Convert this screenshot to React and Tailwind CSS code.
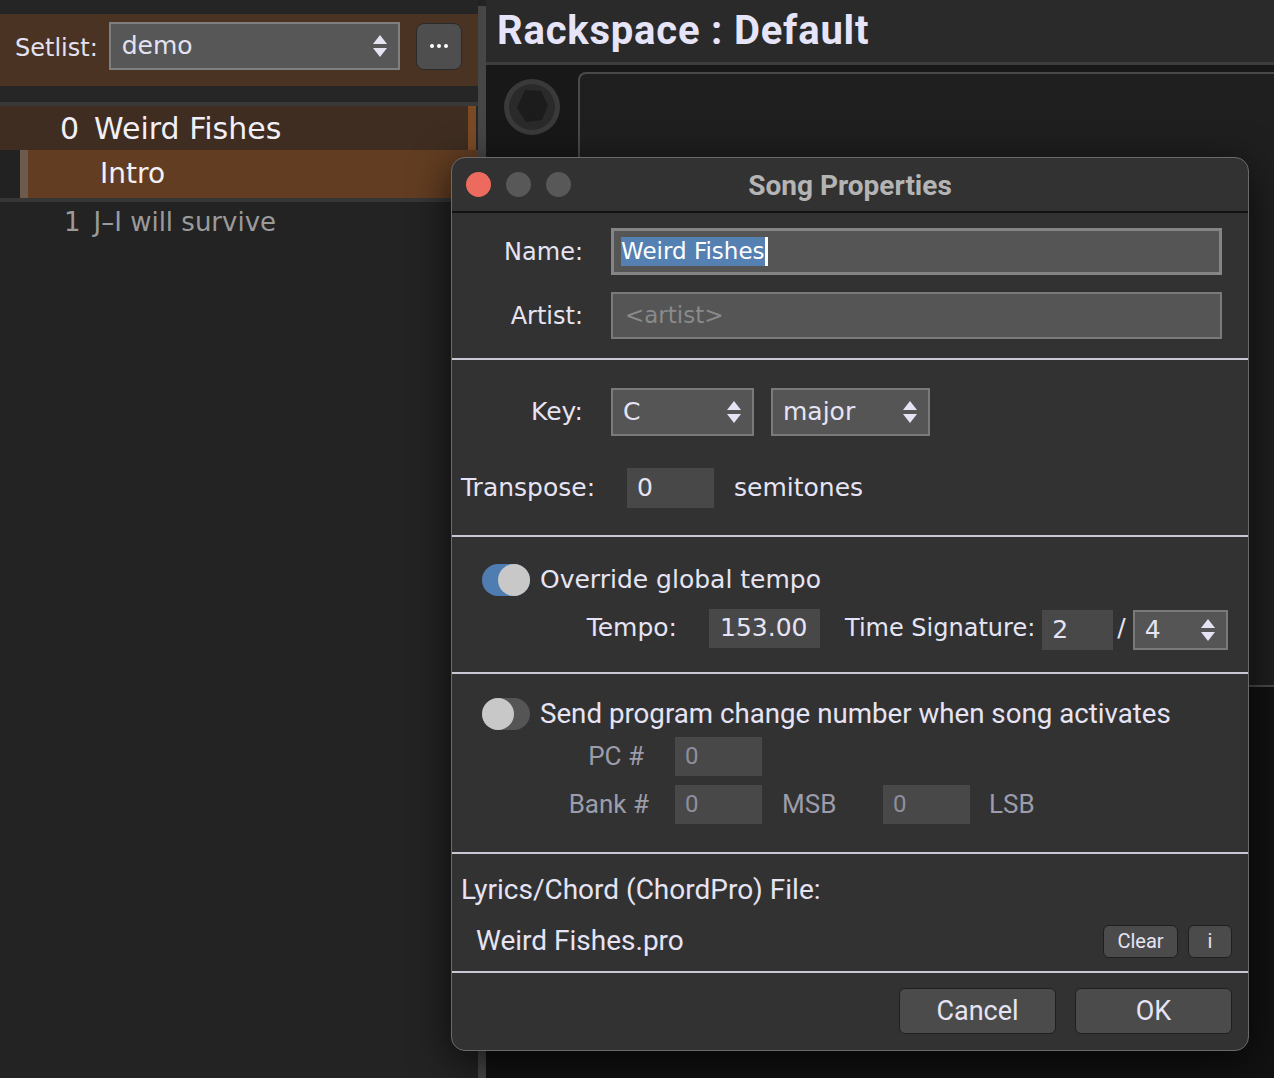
import React from 'react';

const LG = "font-['DejaVu_Sans',sans-serif]";
const MY = "font-['Roboto',sans-serif]";

function Arrows({ className = '' }) {
  return (
    <svg width="16" height="26" viewBox="0 0 16 26" className={className}>
      <polygon points="8,2 15,11 1,11" fill="#e6e4f4" />
      <polygon points="1,15 15,15 8,24" fill="#e6e4f4" />
    </svg>
  );
}

function Select({ value, w, h = 48 }) {
  return (
    <div
      className={`flex items-center justify-between bg-[#555555] border-2 border-[#7a7a7a] pl-[10px] pr-[10px] ${w}`}
      style={{ height: h }}
    >
      <span className="text-[25px] text-[#e6e4f4]">{value}</span>
      <Arrows />
    </div>
  );
}

function Field({ value, w, dim }) {
  return (
    <div className={`flex items-center h-[39px] bg-[#484848] pl-[10px] ${w}`}>
      <span className={`text-[24px] ${dim ? 'text-[#8e8e9c]' : 'text-[#e6e4f4]'}`}>{value}</span>
    </div>
  );
}

function Toggle({ on }) {
  return (
    <div className={`relative w-[48px] h-[32px] rounded-full ${on ? 'bg-[#4f7db2]' : 'bg-[#555555]'}`}>
      <div
        className={`absolute top-0 w-[32px] h-[32px] rounded-full bg-[#c8c8c8] ${on ? 'right-0' : 'left-0'}`}
      />
    </div>
  );
}

function Btn({ children, w, h, text }) {
  return (
    <div
      className={`flex items-center justify-center rounded-[6px] bg-[#4b4b4b] border border-[#1f1f1f] text-[#e6e4f4] ${MY} ${w} ${h} ${text}`}
    >
      {children}
    </div>
  );
}

function Knob() {
  return (
    <svg width="58" height="58" viewBox="0 0 58 58">
      <circle cx="29" cy="29" r="28" fill="#3a3a3a" />
      <circle cx="29" cy="29" r="23" fill="#2a2a2a" />
      <polygon points="22,12 38,13 45,27 39,42 23,44 14,30" fill="#1c1c1c" />
    </svg>
  );
}

function Dialog() {
  return (
    <div
      className={`absolute left-[451px] top-[157px] w-[798px] h-[894px] flex flex-col bg-[#323232] border border-[#6a6a6a] rounded-[14px] overflow-hidden shadow-[0_10px_40px_rgba(0,0,0,0.7)] ${LG} text-[#e6e4f4]`}
    >
      {/* title bar */}
      <div className="relative flex items-center h-[55px] border-b-2 border-[#111111] shrink-0">
        <div className="flex gap-[15px] pl-[14px]">
          <div className="w-[25px] h-[25px] rounded-full bg-[#ec6a5e]" />
          <div className="w-[25px] h-[25px] rounded-full bg-[#585858]" />
          <div className="w-[25px] h-[25px] rounded-full bg-[#585858]" />
        </div>
        <div className={`absolute inset-x-0 top-[7px] text-center text-[28px] font-bold text-[#b4b4b4] ${MY}`}>
          Song Properties
        </div>
      </div>

      {/* name / artist */}
      <div className="flex flex-col gap-[17px] pt-[15px] h-[147px] border-b-2 border-[#c9c9d6] shrink-0">
        <div className="flex items-center">
          <div className="w-[131px] text-right text-[24px]">Name:</div>
          <div className="ml-[28px] w-[611px] h-[47px] flex items-center bg-[#555555] border-[3px] border-[#858585] pl-[7px]">
            <span className="bg-[#5580b2] text-white text-[23px] leading-[29px]">Weird Fishes</span>
            <span className="w-[3px] h-[29px] bg-white" />
          </div>
        </div>
        <div className="flex items-center">
          <div className="w-[131px] text-right text-[24px]">Artist:</div>
          <div className="ml-[28px] w-[611px] h-[47px] flex items-center bg-[#555555] border-2 border-[#7a7a7a] pl-[12px]">
            <span className="text-[23px] text-[#8a8a8a]">&lt;artist&gt;</span>
          </div>
        </div>
      </div>

      {/* key / transpose */}
      <div className="flex flex-col pt-[28px] h-[177px] border-b-2 border-[#c9c9d6] shrink-0">
        <div className="flex items-center">
          <div className="w-[131px] text-right text-[25px]">Key:</div>
          <div className="ml-[28px]">
            <Select value="C" w="w-[143px]" />
          </div>
          <div className="ml-[17px]">
            <Select value="major" w="w-[159px]" />
          </div>
        </div>
        <div className="flex items-center mt-[32px] pl-[9px]">
          <div className="w-[166px] text-[25px]">Transpose:</div>
          <div className="flex items-center w-[87px] h-[40px] bg-[#484848] pl-[10px] text-[25px]">0</div>
          <div className="ml-[20px] text-[25px]">semitones</div>
        </div>
      </div>

      {/* tempo */}
      <div className="flex flex-col pt-[24px] h-[137px] border-b-2 border-[#c9c9d6] shrink-0">
        <div className="flex items-center pl-[30px] gap-[10px]">
          <Toggle on />
          <span className="text-[25px]">Override global tempo</span>
        </div>
        <div className="flex items-center mt-[8px]">
          <div className="w-[225px] text-right text-[25px]">Tempo:</div>
          <div className="ml-[32px] flex items-center w-[111px] h-[39px] bg-[#484848] pl-[11px] text-[25px]">153.00</div>
          <div className="ml-[25px] text-[24px]">Time Signature:</div>
          <div className="ml-[7px] flex items-center w-[71px] h-[40px] bg-[#484848] pl-[10px] text-[25px] mt-[3px]">2</div>
          <div className="ml-[4px] text-[25px]">/</div>
          <div className="ml-[7px] mt-[3px]">
            <Select value="4" w="w-[95px]" h={40} />
          </div>
        </div>
      </div>

      {/* program change */}
      <div className="flex flex-col pt-[19px] h-[180px] border-b-2 border-[#c9c9d6] shrink-0">
        <div className="flex items-center pl-[30px] gap-[10px]">
          <Toggle />
          <span className={`text-[27.7px] ${MY}`}>Send program change number when song activates</span>
        </div>
        <div className={`flex items-center mt-[2px] ${MY} text-[26px] text-[#9c9cab]`}>
          <div className="w-[192px] text-right">PC #</div>
          <div className="ml-[31px]">
            <Field value="0" w="w-[87px]" dim />
          </div>
        </div>
        <div className={`flex items-center mt-[9px] ${MY} text-[26px] text-[#9c9cab]`}>
          <div className="w-[197px] text-right">Bank #</div>
          <div className="ml-[26px]">
            <Field value="0" w="w-[87px]" dim />
          </div>
          <div className="ml-[20px] w-[101px]">MSB</div>
          <Field value="0" w="w-[87px]" dim />
          <div className="ml-[19px]">LSB</div>
        </div>
      </div>

      {/* chordpro file */}
      <div className={`flex flex-col h-[119px] border-b-2 border-[#c9c9d6] shrink-0 ${MY}`}>
        <div className="pl-[9px] pt-[19px] text-[28px] leading-[34px]">Lyrics/Chord (ChordPro) File:</div>
        <div className="flex items-center mt-[13px] pr-[16px]">
          <div className="flex-1 pl-[24px] text-[28px]">Weird Fishes.pro</div>
          <Btn w="w-[75px]" h="h-[33px]" text="text-[20px]">Clear</Btn>
          <div className="ml-[10px]">
            <Btn w="w-[44px]" h="h-[33px]" text="text-[20px]">i</Btn>
          </div>
        </div>
      </div>

      {/* buttons */}
      <div className="flex justify-end gap-[19px] pt-[15px] pr-[16px]">
        <Btn w="w-[157px]" h="h-[46px]" text="text-[27px]">Cancel</Btn>
        <Btn w="w-[157px]" h="h-[46px]" text="text-[27px]">OK</Btn>
      </div>
    </div>
  );
}

export default function App() {
  return (
    <div className={`relative w-[1274px] h-[1078px] overflow-hidden bg-[#1c1c1c] flex ${LG}`}>
      {/* setlist panel */}
      <div className="w-[478px] flex flex-col bg-[#232323] shrink-0">
        <div className="h-[14px] bg-[#252525]" />
        <div className="h-[72px] bg-[#4a3323] flex items-center pl-[15px] pb-[8px]">
          <span className="text-[24px] text-[#e4e2f2] mt-[3px]">Setlist:</span>
          <div className="ml-[11px] w-[291px] h-[48px] flex items-center justify-between bg-[#575757] border-2 border-[#7f7f7f] pl-[11px] pr-[10px]">
            <span className="text-[25px] text-[#e4e2f2]">demo</span>
            <Arrows />
          </div>
          <div className="ml-[16px] w-[46px] h-[47px] rounded-[8px] bg-[#4e4e4e] border border-[#2a2a2a] flex items-center justify-center gap-[3px]">
            <span className="w-[4px] h-[4px] rounded-full bg-white" />
            <span className="w-[4px] h-[4px] rounded-full bg-white" />
            <span className="w-[4px] h-[4px] rounded-full bg-white" />
          </div>
        </div>
        <div className="h-[16px] bg-[#262626]" />
        <div className="h-[4px] bg-[#383838]" />
        <div className="h-[44px] flex bg-[#3e2d20]">
          <div className="flex-1 flex items-center pl-[60px] text-[30px] text-[#f2f0f6]">
            <span>0</span>
            <span className="ml-[15px]">Weird Fishes</span>
          </div>
          <div className="w-[8px] bg-[#7b4a25]" />
          <div className="w-[2px] bg-[#262626]" />
        </div>
        <div className="h-[48px] flex">
          <div className="w-[20px] bg-[#222222]" />
          <div className="w-[8px] bg-[#6c5a4c]" />
          <div className="flex-1 flex items-center pl-[72px] bg-[#623d21] text-[28px] text-[#f2f0f6]">Intro</div>
        </div>
        <div className="h-[4px] bg-[#363636]" />
        <div className="h-[40px] flex items-center pl-[64px] text-[26px] text-[#9a9a9a]">
          <span>1</span>
          <span className="ml-[13px]">J–I will survive</span>
        </div>
      </div>

      {/* divider */}
      <div className="w-[8px] flex flex-col shrink-0">
        <div className="h-[6px] bg-[#222222]" />
        <div className="flex-1 bg-[#464646]" />
      </div>

      {/* rackspace */}
      <div className="flex-1 flex flex-col">
        <div className="h-[62px] bg-[#2a2a2a] flex items-center pl-[11px]">
          <span className={`text-[40px] font-bold tracking-[0.8px] text-[#e6e4f8] ${MY}`}>Rackspace : Default</span>
        </div>
        <div className="h-[3px] bg-[#3c3c3c]" />
        <div className="flex flex-col flex-1 bg-[#121212]">
          <div className="flex h-[622px] bg-[#181818]">
            <div className="w-[92px] flex justify-center pt-[13px]">
              <Knob />
            </div>
            <div className="flex-1 mt-[7px] bg-[#1f1f1f] border-l-2 border-t-2 border-b-2 border-[#4a4a4a] rounded-tl-[8px]" />
          </div>
        </div>
      </div>

      <Dialog />
    </div>
  );
}
